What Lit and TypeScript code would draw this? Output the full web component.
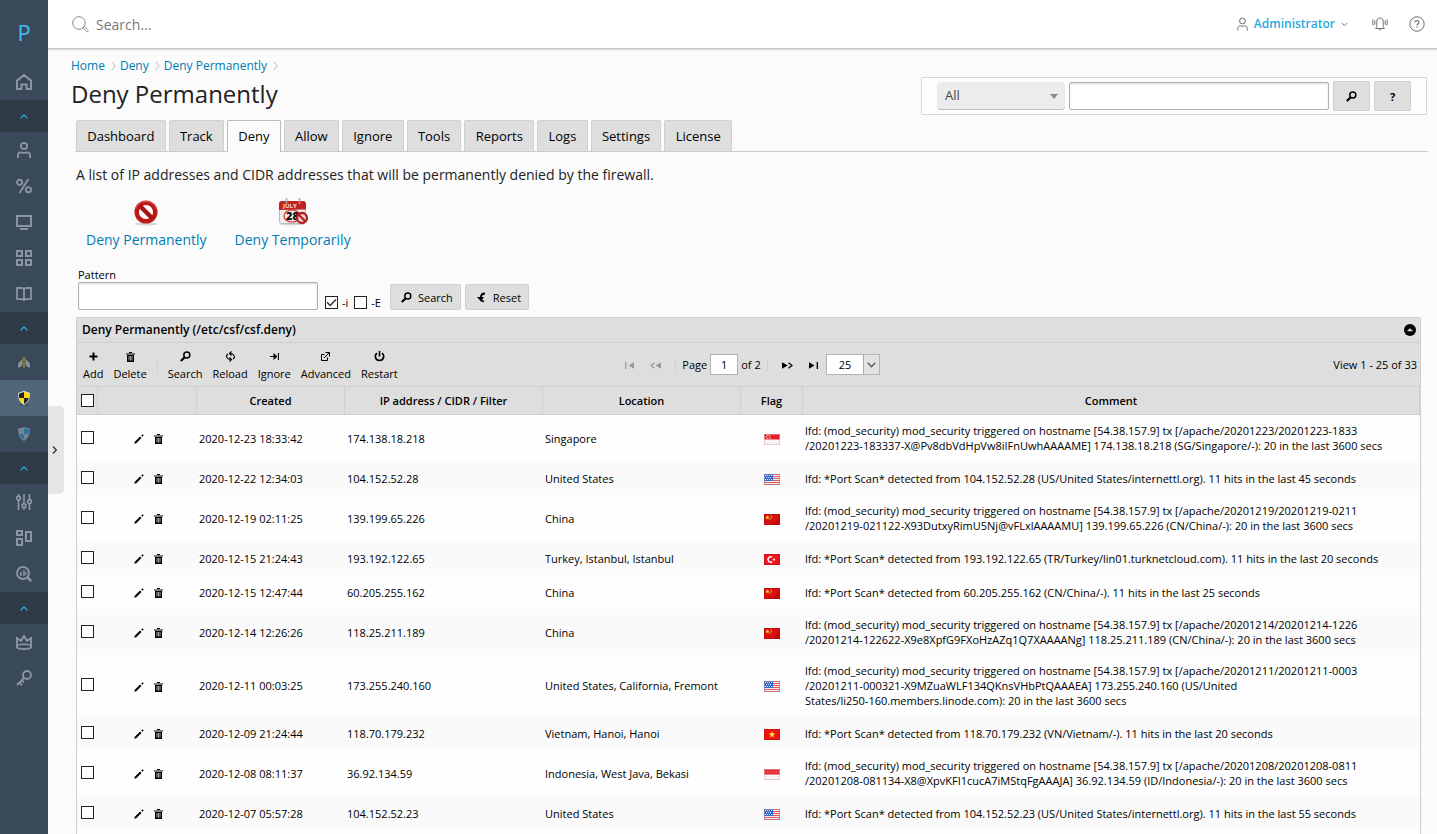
import { LitElement, html, css, svg, nothing, TemplateResult } from "lit";
import { customElement } from "lit/decorators.js";

type Icon = { w: number; h: number; body: unknown };

const line = (d: string, w = 1.7) =>
  svg`<path d=${d} fill="none" stroke="currentColor" stroke-width=${w}/>`;
const fill = (d: string) => svg`<path d=${d} fill="currentColor"/>`;

const icons: Record<string, Icon> = {
  home: { w: 16, h: 16, body: line("M1 6.6 8 1l7 5.600V15h-4.400v-4.600H5.400V15H1z", 2) },
  user: {
    w: 16,
    h: 16,
    body: svg`<circle cx="8" cy="4" r="3.100" fill="none" stroke="currentColor" stroke-width="1.900"/>
      ${line("M1.900 16v-2.200c0-2.200 1.200-3.400 3-3.400 1 0 1.800.7 3.100.7s2.100-.7 3.100-.7c1.800 0 3 1.200 3 3.400V16", 1.9)}`,
  },
  percent: {
    w: 16,
    h: 16,
    body: svg`<circle cx="3.600" cy="4.300" r="2.600" fill="none" stroke="currentColor" stroke-width="1.900"/>
      <circle cx="12.400" cy="11.700" r="2.600" fill="none" stroke="currentColor" stroke-width="1.900"/>
      ${line("M12.500 1 3.500 15", 1.9)}`,
  },
  screen: { w: 16, h: 16, body: svg`${line("M1 2h14v10H1z", 2)}${line("M4 15h8", 2)}` },
  grid: { w: 16, h: 16, body: line("M1 1h5v5H1zM10 1h5v5h-5zM1 10h5v5H1zM10 10h5v5h-5z", 2) },
  book: { w: 16, h: 16, body: line("M8 14.200 6.500 13.200H1V2h5.500L8 3l1.500-1H15v11.200H9.500zM8 3v11", 1.8) },
  sliders: {
    w: 16,
    h: 16,
    body: svg`${line("M2.500 0v2M2.500 6.500V16M8 0v9.500M8 14v2M13.500 0v5.500M13.500 10v6")}
      <g fill="none" stroke="currentColor" stroke-width="1.700"><circle cx="2.500" cy="4.200" r="1.900"/><circle cx="8" cy="11.800" r="1.900"/><circle cx="13.500" cy="7.700" r="1.900"/></g>`,
  },
  blocks: { w: 16, h: 16, body: line("M1 1h5v4H1zM1 9h5v6H1zM10 2h5v9h-5z", 2) },
  stats: {
    w: 16,
    h: 16,
    body: svg`<circle cx="7" cy="7" r="6" fill="none" stroke="currentColor" stroke-width="1.900"/>
      ${line("M11.500 11.500 15.300 15.300", 2.6)}${line("M5 6v4M8 4v6", 1.6)}${line("M10 6v3", 1.2)}`,
  },
  crown: {
    w: 16,
    h: 16,
    body: svg`${line("M1 13.500V4l4 2.800L8 2l3 4.800L15 4v9.500c-1.500 2-12.500 2-14 0z", 1.9)}${line("M1.500 11.500c2.500-1.800 10.500-1.800 13 0", 1.5)}`,
  },
  key: {
    w: 16,
    h: 16,
    body: svg`<circle cx="11" cy="5" r="4" fill="none" stroke="currentColor" stroke-width="1.900"/>
      ${line("M8.200 7.800 1 15M3.500 12.500 6 15M5.800 10.200 8 12.400", 1.9)}`,
  },
  up: { w: 8, h: 5, body: line("M.5 4.400 4 1l3.500 3.400", 1.3) },
  right: { w: 5, h: 8, body: line("M1 .5 4.300 4 1 7.500", 1.3) },
  down: { w: 7, h: 5, body: line("M.8 1 3.500 3.700 6.200 1", 1) },
  crumb: { w: 5, h: 10, body: line("M.6.800 4.300 5 .6 9.200", 1) },
  bee: {
    w: 16,
    h: 16,
    body: svg`<path d="M6.500 5.500C3 7 1.500 10 2 13.500c2 .500 4-2 4.800-4zM9.500 5.500C13 7 14.500 10 14 13.500c-2 .500-4-2-4.800-4z" fill="#8595a3"/>
      <path d="M8 3.500c2 0 2.400 3 2 6S8.800 14 8 14s-1.600-1.500-2-4.500.0-6 2-6z" fill="#847a42"/>
      <path d="M6.500 3.500 5.800 2M9.500 3.500 10.200 2M6 7.500h4M6.200 10.200h3.600" stroke="#5d5b43" fill="none"/>`,
  },
  guard: {
    w: 16,
    h: 16,
    body: svg`<ellipse cx="8" cy="14.600" rx="5" ry="1" fill="#3d4c5a"/>
      <path d="M8 .8 14 3c0 5.500-1.500 9.500-6 12C3.500 12.500 2 8.500 2 3z" fill="#d9dcde"/>
      <path d="M8 2v6H3.300C3 6.500 2.900 5.200 2.900 3.800z" fill="#222"/><path d="M8 2v6h4.700c.3-1.500.4-2.800.4-4.200z" fill="#ffd600"/>
      <path d="M8 8H3.300C4 10.700 5.500 12.700 8 14z" fill="#ffd600"/><path d="M8 8h4.700C12 10.700 10.500 12.700 8 14z" fill="#222"/>`,
  },
  shield: {
    w: 16,
    h: 16,
    body: svg`<path d="M8 1c2 1 4 1.300 6 1.300 0 6-1.500 10.200-6 12.700-4.500-2.500-6-6.700-6-12.700 2 0 4-.300 6-1.300z" fill="#74838f"/>
      <path d="M8 2.200c1.700.700 3.200 1 5 1.100 0 1.700-.1 3.200-.5 4.700H8zM8 8v5.800C5.300 12 4.100 10.200 3.500 8z" fill="#2f71a0"/>`,
  },
  search: {
    w: 17,
    h: 17,
    body: svg`<circle cx="7" cy="7" r="6.300" fill="none" stroke="#8a8a8a"/><path d="m11.600 11.600 1-.9 3.900 4-1.300 1.300-4-3.900z" fill="none" stroke="#8a8a8a" stroke-width=".9"/>`,
  },
  account: {
    w: 11,
    h: 14,
    body: svg`<circle cx="5.500" cy="4" r="2.900" fill="none" stroke="currentColor"/>${line("M.8 13.500V11.300C.8 9.800 1.800 8.800 3.200 8.800c.8 0 1.300.5 2.300.5s1.500-.5 2.300-.5c1.400 0 2.400 1 2.400 2.500v2.200", 1)}`,
  },
  bell: {
    w: 16,
    h: 14,
    body: svg`${line("M3.500 11.500c1-.7 1.300-1.700 1.300-3V4.500C4.800 2.500 6 1 8 1s3.200 1.500 3.200 3.500v4c0 1.300.3 2.300 1.300 3zM7 12.500c.3.700 1.700.7 2 0M2.800 3.500v4.200M13.200 3.500v4.200M1.200 2.500C.4 4.300.4 6.500 1.200 8.500M14.800 2.500c.8 1.800.8 4 0 6", 1)}`,
  },
  help: {
    w: 16,
    h: 16,
    body: svg`<circle cx="8" cy="8" r="7.200" fill="none" stroke="currentColor"/>${line("M6 6.500C6 4 10 4 10 6.300 10 7.800 8 7.800 8 9.500M8 10.500v1.300", 1.1)}`,
  },
  lens: {
    w: 11,
    h: 11,
    body: svg`<circle cx="6.800" cy="4" r="3" fill="none" stroke="currentColor" stroke-width="1.500"/>${line("M4.500 6.500.8 10", 2.2)}`,
  },
  undo: { w: 11, h: 11, body: svg`${fill("M1 5h7L5 9.500z")}${line("M9 1.500C6 1.500 4.800 2.800 4.800 6M4.800 8.500 8 9.500", 1.8)}` },
  plus: { w: 9, h: 9, body: line("M4.500.500v8M.5 4.500h8", 2) },
  trash: {
    w: 9,
    h: 10,
    body: svg`${line("M0 2h9M3 .5h3", 1.2)}${fill("M1 3h7v7H1z")}<path d="M3 4v4.500M4.500 4v4.500M6 4v4.500" stroke="#eee" stroke-width=".7"/>`,
  },
  reload: {
    w: 11,
    h: 11,
    body: line("M6.500.5 4.500 2.500l2 2M4.500 2.500C8 2.500 9.500 4 9.500 6.500L8 8M4.500 10.500l2-2-2-2M6.500 8.500C3 8.500 1.500 7 1.500 4.500L3 3", 1.1),
  },
  tab: { w: 9, h: 9, body: svg`${line("M0 4.500h6M8.500 1v7", 1.2)}${fill("M3.500 1 7.500 4.500l-4 3.500z")}` },
  popout: { w: 9, h: 9, body: line("M3.500 2.500h-3v6h6v-3M4.500.5h4v4M8.500.5 3 6", 1) },
  power: { w: 11, h: 11, body: line("M3 2.300C.2 4 1 9.500 5.500 9.500S10.800 4 8 2.300M5.500 0v5.500", 1.7) },
  pencil: { w: 10, h: 10, body: svg`${line("m1.800 8.200 5-5", 2)}${fill("M.3 9.700 1 7l2 2zM7.300 1.500 8.500.3l1.200 1.200-1.200 1.200z")}` },
  first: { w: 9, h: 7, body: svg`${line("M.7 0v7", 1.3)}${fill("M9 .3v6.400L3.500 3.500z")}` },
  prev: { w: 11, h: 7, body: svg`${line("M4.500.8 1 3.500l3.500 2.700", 1.2)}${fill("M11 .3v6.400L5.500 3.500z")}` },
  next: { w: 11, h: 7, body: svg`${line("M6.500.8 10 3.500 6.500 6.200", 1.2)}${fill("M0 .3v6.400L5.800 3.500z")}` },
  last: { w: 9, h: 7, body: svg`${line("M8.300 0v7", 1.3)}${fill("M0 .3v6.400L5.500 3.500z")}` },
  collapse: {
    w: 12,
    h: 12,
    body: svg`<circle cx="6" cy="6" r="6" fill="#000"/><path d="M2.800 7.300 6 4.300l3.200 3z" fill="#dedede"/>`,
  },
  caret: { w: 8, h: 5, body: fill("M0 0h8L4 5z") },
  chevron: { w: 9, h: 6, body: line("M.8.800 4.500 4.700 8.200.8", 1.3) },
  check: { w: 11, h: 9, body: line("M1 4.300 4.200 7.500 10 1.500", 1.5) },
  deny: {
    w: 28,
    h: 28,
    body: svg`<ellipse cx="14" cy="26" rx="12" ry="1.500" fill="#d5d5d5"/>
      <circle cx="14" cy="14" r="9.300" fill="#fff" stroke="#bd1a17" stroke-width="4.500"/>
      <path d="m7.500 7.500 13 13" stroke="#a81614" stroke-width="4.500"/><path d="M3.500 11A11 11 0 0 1 24.500 11" fill="none" stroke="#dd5f5b"/>`,
  },
  calendar: {
    w: 32,
    h: 28,
    body: svg`<ellipse cx="15" cy="26" rx="13" ry="1.300" fill="#d5d5d5"/>
      <rect x="2.500" y="4" width="26" height="21.500" rx="2" fill="#eee" stroke="#bbb"/>
      <path d="M2 12V6q0-3 3-3h21q3 0 3 3v5.500z" fill="#bf2420"/><path d="M9.500 0v6M22.500 0v6" stroke="#aaa" stroke-width="1.500"/>
      <text x="6" y="10" font-size="6" font-weight="700" fill="#ffdcdc" font-family="Open Sans, sans-serif">JULY</text>
      <ellipse cx="15" cy="18" rx="8" ry="6" fill="none" stroke="#d22f2b" stroke-width="1.200"/>
      <text x="9" y="22" font-size="11" font-weight="800" fill="#111" font-family="Open Sans, sans-serif">28</text>
      <circle cx="25" cy="20" r="5" fill="#e8d6d6" stroke="#b81c19" stroke-width="2.300"/><path d="m21.500 16.500 7 7" stroke="#b81c19" stroke-width="2.300"/>`,
  },
};

const icon = (name: string) => {
  const i = icons[name];
  return html`<svg width=${i.w} height=${i.h} viewBox="0 0 ${i.w} ${i.h}" aria-hidden="true">${i.body}</svg>`;
};

const STAR = "M0-1 .3-.3 1-.3 .4.200.6.900 0 .5-.6.900-.4.200-1-.3-.3-.3z";
const flagArt: Record<string, unknown> = {
  SG: svg`<path fill="#f7f3f3" d="M0 0h16v11H0z"/><path fill="#e81c24" d="M0 0h16v5.500H0z"/><path d="M4.500 1.500A1.600 1.600 0 1 0 4.500 4.500M5 2h1.500M5.500 4H7" stroke="#fff" stroke-width=".8" fill="none"/>`,
  ID: svg`<path fill="#f7f3f3" d="M0 0h16v11H0z"/><path fill="#e2252b" d="M0 0h16v5.500H0z"/><path d="M0 3h16" stroke="#f0585c"/>`,
  US: svg`<path fill="#f6eeee" d="M0 0h16v11H0z"/><path d="M0 .5h16M0 2.500h16M0 4.500h16M0 6.500h16M0 8.500h16M0 10.500h16" stroke="#ea5a55"/><path fill="#3468cc" d="M0 0h9v7H0z"/><path d="M1 1.500h7M2 3.500h6M1 5.500h7" stroke="#dce6ff" stroke-dasharray="1 1"/>`,
  CN: svg`<path fill="#d61111" d="M0 0h16v11H0z"/><path fill="#c50a0a" d="M8 11 16 3v8z"/><path fill="#ffd930" transform="translate(3.500 3.500) scale(2.200)" d=${STAR}/><path d="M6.500 1.200 7.500 2.500 7 4.500 5.500 5.500" stroke="#ffb020" stroke-width=".9" fill="none"/>`,
  TR: svg`<path fill="#ec1620" d="M0 0h16v11H0z"/><path d="M8.200 3.200A2.700 2.700 0 1 0 8.200 7.800" stroke="#fff" stroke-width="1.400" fill="none"/><path fill="#fff" transform="translate(10 5.500) scale(1.600)" d=${STAR}/>`,
  VN: svg`<path fill="#ec1515" d="M0 0h16v11H0z"/><path fill="#ffef30" transform="translate(8 5.500) scale(3.200)" d=${STAR}/>`,
};
const edge: Record<string, string> = { SG: "#d9b0b0", ID: "#d9b0b0", US: "#a3849c", CN: "#ad0909", TR: "#c80f18", VN: "#d00a0a" };
const flag = (code: string) => html`<svg class="flag" width="16" height="11" viewBox="0 0 16 11" role="img" aria-label=${code}>
  ${flagArt[code]}<path d="M.5.500h15v10H.5z" fill="none" stroke=${edge[code]} stroke-opacity=".6"/></svg>`;

const nav: string[][] = [
  ["home"],
  ["user", "percent", "screen", "grid", "book"],
  ["bee", "guard", "shield"],
  ["sliders", "blocks", "stats"],
  ["crown", "key"],
];
const tabs = ["Dashboard", "Track", "Deny", "Allow", "Ignore", "Tools", "Reports", "Logs", "Settings", "License"];
const actions: [string, string][] = [
  ["plus", "Add"],
  ["trash", "Delete"],
  ["", ""],
  ["lens", "Search"],
  ["reload", "Reload"],
  ["tab", "Ignore"],
  ["popout", "Advanced"],
  ["power", "Restart"],
];
const rows: [string, string, string, string, string][] = [
  ["2020-12-23 18:33:42", "174.138.18.218", "Singapore", "SG",
    "lfd: (mod_security) mod_security triggered on hostname [54.38.157.9] tx [/apache/20201223/20201223-1833\n/20201223-183337-X@Pv8dbVdHpVw8iIFnUwhAAAAME] 174.138.18.218 (SG/Singapore/-): 20 in the last 3600 secs"],
  ["2020-12-22 12:34:03", "104.152.52.28", "United States", "US",
    "lfd: *Port Scan* detected from 104.152.52.28 (US/United States/internettl.org). 11 hits in the last 45 seconds"],
  ["2020-12-19 02:11:25", "139.199.65.226", "China", "CN",
    "lfd: (mod_security) mod_security triggered on hostname [54.38.157.9] tx [/apache/20201219/20201219-0211\n/20201219-021122-X93DutxyRimU5Nj@vFLxlAAAAMU] 139.199.65.226 (CN/China/-): 20 in the last 3600 secs"],
  ["2020-12-15 21:24:43", "193.192.122.65", "Turkey, Istanbul, Istanbul", "TR",
    "lfd: *Port Scan* detected from 193.192.122.65 (TR/Turkey/lin01.turknetcloud.com). 11 hits in the last 20 seconds"],
  ["2020-12-15 12:47:44", "60.205.255.162", "China", "CN",
    "lfd: *Port Scan* detected from 60.205.255.162 (CN/China/-). 11 hits in the last 25 seconds"],
  ["2020-12-14 12:26:26", "118.25.211.189", "China", "CN",
    "lfd: (mod_security) mod_security triggered on hostname [54.38.157.9] tx [/apache/20201214/20201214-1226\n/20201214-122622-X9e8XpfG9FXoHzAZq1Q7XAAAANg] 118.25.211.189 (CN/China/-): 20 in the last 3600 secs"],
  ["2020-12-11 00:03:25", "173.255.240.160", "United States, California, Fremont", "US",
    "lfd: (mod_security) mod_security triggered on hostname [54.38.157.9] tx [/apache/20201211/20201211-0003\n/20201211-000321-X9MZuaWLF134QKnsVHbPtQAAAEA] 173.255.240.160 (US/United\nStates/li250-160.members.linode.com): 20 in the last 3600 secs"],
  ["2020-12-09 21:24:44", "118.70.179.232", "Vietnam, Hanoi, Hanoi", "VN",
    "lfd: *Port Scan* detected from 118.70.179.232 (VN/Vietnam/-). 11 hits in the last 20 seconds"],
  ["2020-12-08 08:11:37", "36.92.134.59", "Indonesia, West Java, Bekasi", "ID",
    "lfd: (mod_security) mod_security triggered on hostname [54.38.157.9] tx [/apache/20201208/20201208-0811\n/20201208-081134-X8@XpvKFI1cucA7iMStqFgAAAJA] 36.92.134.59 (ID/Indonesia/-): 20 in the last 3600 secs"],
  ["2020-12-07 05:57:28", "104.152.52.23", "United States", "US",
    "lfd: *Port Scan* detected from 104.152.52.23 (US/United States/internettl.org). 11 hits in the last 55 seconds"],
];

@customElement("app-root")
export class AppRoot extends LitElement {
  static styles = css`
    :host { display: flex; min-height: 100vh; background: #fbfbfb; color: #000; font: 11px/15px "Open Sans", sans-serif; }
    *, *::before, *::after { box-sizing: border-box; }
    svg { display: block; flex: none; }
    button, input, select { font: inherit; color: inherit; margin: 0; padding: 0; border: 0; background: none; border-radius: 0; }
    button { cursor: pointer; }
    a { color: #007cb0; text-decoration: none; }

    .side { width: 48px; flex: none; background: #394959; color: #8995a1; position: relative; }
    .logo { height: 64px; display: flex; align-items: center; justify-content: center; font-size: 22px; line-height: 30px; color: #3fbef3; }
    .item, .fold { width: 100%; display: flex; align-items: center; justify-content: center; }
    .item { height: 36px; color: inherit; }
    .item.on { background: #516779; }
    .fold { height: 32px; background: #2e3a46; color: #35ade0; }
    .handle { position: absolute; left: 48px; top: 406px; width: 16px; height: 88px; display: flex; align-items: center; justify-content: center; padding-right: 3px; background: #e5e5e5; border-radius: 0 5px 5px 0; color: #333; }

    .page { flex: 1; min-width: 0; display: flex; flex-direction: column; }
    .top { height: 49px; display: flex; align-items: center; justify-content: space-between; padding: 0 12px 0 24px; background: #fff; border-bottom: 1px solid #c8cbcb; box-shadow: 0 1px 1px #ddd; }
    .find { display: flex; align-items: center; gap: 7px; flex: 1; }
    .find input { font-size: 14px; line-height: 20px; height: 28px; width: 300px; outline: none; }
    .find input::placeholder { color: #777; opacity: 1; }
    .tools { display: flex; align-items: center; color: #667078; }
    .account { display: flex; align-items: center; gap: 6px; margin-right: 24px; }
    .account b { font-size: 12px; line-height: 18px; font-weight: 600; color: #28aade; }
    .bell { margin-right: 21px; }

    .body { flex: 1; display: flex; flex-direction: column; padding: 8px 0 0 23px; }
    .head { display: flex; justify-content: space-between; align-items: flex-end; padding-right: 10px; }
    .crumbs { display: flex; align-items: center; gap: 4px; font-size: 12px; line-height: 18px; color: #bbb; }
    .crumbs a { margin-right: 2px; }
    h1 { margin: 1px 0 3px; font-size: 24px; line-height: 36px; font-weight: 400; color: #222; }
    .box { display: flex; align-items: center; gap: 4px; height: 38px; padding: 0 15px; border: 1px solid #d5d5d5; border-radius: 2px; background: #fdfdfd; }
    .stack { display: inline-grid; align-items: center; }
    .stack > * { grid-area: 1 / 1; }
    .stack svg { justify-self: end; pointer-events: none; }
    .stack select { appearance: none; }
    .type select { width: 128px; height: 28px; padding-left: 8px; font-size: 13px; background: #ececec; border-bottom: 1px solid #b9c0c6; border-radius: 4px; color: #444; }
    .type svg { margin-right: 7px; color: #84888c; }
    .field { height: 28px; border: 1px solid #b0b0b0; border-radius: 2px; background: #fff; box-shadow: inset 0 1px 2px #ddd; padding: 0 6px; }
    .query { width: 260px; }
    .btn { display: inline-flex; align-items: center; justify-content: center; gap: 6px; background: #dedede; border: 1px solid #d0d0d0; border-radius: 2px; height: 26px; padding: 0 7px 0 10px; }
    .box .btn { height: 30px; width: 37px; padding: 0; font-weight: 700; }

    .strip { margin: 5px 9px 0 4px; padding-left: 1px; border-bottom: 1px solid #c9cccc; }
    .tabs { display: flex; gap: 3px; max-width: 656px; }
    .tab { flex: 1 0 auto; height: 31px; padding: 6px 10px 0; border: 1px solid #d0d0d0; border-bottom: 0; border-radius: 2px 2px 0 0; background: #dedede; color: #000; font-size: 13px; line-height: 18px; text-align: center; }
    .tab.on { background: #fbfbfb; border-color: #b9bcbc; margin-bottom: -1px; height: 32px; }
    .content { flex: 1; display: flex; flex-direction: column; padding: 13px 16px 0 5px; }
    .lead { margin: 0; font-size: 14px; line-height: 20px; color: #222; }
    .links { display: flex; gap: 28px; padding: 13px 10px 17px; }
    .links a { display: flex; flex-direction: column; align-items: center; gap: 4px; font-size: 14px; line-height: 20px; }

    form { display: flex; align-items: flex-end; margin: 0 0 7px 2px; }
    .pattern { display: flex; flex-direction: column; width: 240px; margin-right: 7px; }
    .check { display: flex; align-items: center; gap: 4px; margin-right: 6px; height: 16px; }
    .tick { appearance: none; display: block; width: 13px; height: 13px; border: 1px solid #222; background: #fff; }
    .stack .tick + svg { justify-self: center; color: #333; }
    .go { display: flex; gap: 4px; margin-left: 3px; }

    .panel { flex: 1; border: 1px solid #d0d0d0; border-bottom: 0; border-radius: 2px 2px 0 0; background: #fefefe; }
    .title { display: flex; align-items: center; justify-content: space-between; height: 25px; padding: 0 4px 0 5px; background: #dedede; border-bottom: 1px solid #cfcfcf; }
    h2 { margin: 0; font-size: 12px; line-height: 18px; font-weight: 600; }
    .bar { display: grid; grid-template-columns: 1fr auto 1fr; align-items: center; min-height: 44px; background: #dedede; border-bottom: 1px solid #cfcfcf; }
    .acts { display: flex; align-items: center; padding: 2px 0 0 1px; }
    .act { display: flex; flex-direction: column; align-items: center; gap: 3px; padding: 0 5px; }
    .glyph { height: 13px; display: flex; align-items: center; }
    .sep { width: 1px; height: 12px; background: #d0d0d0; margin: 0 5px; }
    .pager { display: flex; align-items: center; }
    .pager button { padding: 8px 8px 6px; }
    .pager .off { color: #999; }
    .pager .sep { margin: 0 6px; }
    .num { width: 28px; height: 21px; margin: 0 3px; padding: 0; text-align: center; border: 1px solid #b0b0b0; background: #fff; }
    .size select { width: 54px; height: 21px; padding-left: 12px; background: linear-gradient(90deg, #fff 36px, #aaa 36px, #aaa 37px, #e2e2e2 37px); border: 1px solid #b5b5b5; }
    .size svg { margin-right: 4px; color: #555; }
    .view { text-align: right; padding-right: 3px; }

    table { width: 100%; table-layout: fixed; border-collapse: separate; border-spacing: 0; }
    th { height: 28px; padding: 0; background: #dedede; font-weight: 600; text-align: center; border-right: 1px solid #d0d0d0; border-bottom: 1px solid #cfcfcf; }
    td { padding: 8px 2px; height: 34px; vertical-align: middle; white-space: pre-line; }
    tbody tr:nth-child(even) { background: #fafafa; }
    td.ip, td.loc, td.act2, td.pick, td.fl { white-space: normal; }
    th.pick { padding: 0 0 0 4px; }
    td.pick { padding: 0 0 2px 4px; }
    td.act2, td.fl { padding: 2px 0 0; }
    .edit { display: flex; gap: 10px; padding-left: 36px; }
    .flag { margin: 0 auto; }
    .c1 { width: 21px; } .c2 { width: 99px; } .c3 { width: 148px; } .c4, .c5 { width: 198px; } .c6 { width: 62px; }
  `;

  private row(r: (typeof rows)[number]): TemplateResult {
    const [created, ip, place, code, note] = r;
    return html`<tr>
      <td class="pick"><input class="tick" type="checkbox" aria-label="Select ${ip}" /></td>
      <td class="act2"><div class="edit"><button aria-label="Edit ${ip}">${icon("pencil")}</button><button aria-label="Delete ${ip}">${icon("trash")}</button></div></td>
      <td>${created}</td><td class="ip">${ip}</td><td class="loc">${place}</td><td class="fl">${flag(code)}</td><td>${note}</td>
    </tr>`;
  }

  render() {
    return html`
      <nav class="side" aria-label="Main">
        <div class="logo">P</div>
        ${nav.map((group, i) => html`
          ${i ? html`<button class="fold" aria-label="Toggle section">${icon("up")}</button>` : nothing}
          ${group.map((n) => html`<a class="item ${n === "guard" ? "on" : ""}" href="#" aria-label=${n}>${icon(n)}</a>`)}`)}
        <button class="handle" aria-label="Expand sidebar">${icon("right")}</button>
      </nav>
      <div class="page">
        <header class="top">
          <label class="find">${icon("search")}<input type="text" placeholder="Search..." aria-label="Search" /></label>
          <div class="tools">
            <button class="account">${icon("account")}<b>Administrator</b>${icon("down")}</button>
            <button class="bell" aria-label="Notifications">${icon("bell")}</button>
            <button aria-label="Help">${icon("help")}</button>
          </div>
        </header>
        <main class="body">
          <div class="head">
            <div>
              <nav class="crumbs" aria-label="Breadcrumb">
                ${["Home", "Deny", "Deny Permanently"].map((c) => html`<a href="#">${c}</a>${icon("crumb")}`)}
              </nav>
              <h1>Deny Permanently</h1>
            </div>
            <div class="box">
              <span class="stack type"><select aria-label="Search in"><option>All</option></select>${icon("caret")}</span>
              <input class="field query" type="text" aria-label="Query" />
              <button class="btn" aria-label="Search">${icon("lens")}</button>
              <button class="btn">?</button>
            </div>
          </div>
          <div class="strip">
            <nav class="tabs" aria-label="Sections">
              ${tabs.map((t) => html`<a class="tab ${t === "Deny" ? "on" : ""}" href="#">${t}</a>`)}
            </nav>
          </div>
          <div class="content">
            <p class="lead">A list of IP addresses and CIDR addresses that will be permanently denied by the firewall.</p>
            <div class="links">
              <a href="#">${icon("deny")}Deny Permanently</a>
              <a href="#">${icon("calendar")}Deny Temporarily</a>
            </div>
            <form @submit=${(e: Event) => e.preventDefault()}>
              <label class="pattern">Pattern<input class="field" type="text" /></label>
              <label class="check"><span class="stack"><input class="tick" type="checkbox" checked />${icon("check")}</span>-i</label>
              <label class="check"><input class="tick" type="checkbox" />-E</label>
              <div class="go">
                <button class="btn">${icon("lens")}Search</button>
                <button class="btn" type="reset">${icon("undo")}Reset</button>
              </div>
            </form>
            <section class="panel">
              <div class="title"><h2>Deny Permanently (/etc/csf/csf.deny)</h2><button aria-label="Collapse">${icon("collapse")}</button></div>
              <div class="bar">
                <div class="acts">
                  ${actions.map(([g, t]) => g
                    ? html`<button class="act"><span class="glyph">${icon(g)}</span>${t}</button>`
                    : html`<span class="sep"></span>`)}
                </div>
                <div class="pager">
                  <button class="off" aria-label="First page">${icon("first")}</button>
                  <button class="off" aria-label="Previous page">${icon("prev")}</button>
                  <span class="sep"></span>
                  <label>Page<input class="num" type="text" value="1" /></label>of 2
                  <span class="sep"></span>
                  <button aria-label="Next page">${icon("next")}</button>
                  <button aria-label="Last page">${icon("last")}</button>
                  <span class="stack size"><select aria-label="Rows per page"><option>25</option></select>${icon("chevron")}</span>
                </div>
                <div class="view">View 1 - 25 of 33</div>
              </div>
              <table>
                <thead>
                  <tr>
                    <th class="pick c1"><input class="tick" type="checkbox" aria-label="Select all" /></th>
                    <th class="c2"></th><th class="c3">Created</th><th class="c4">IP address / CIDR / Filter</th>
                    <th class="c5">Location</th><th class="c6">Flag</th><th>Comment</th>
                  </tr>
                </thead>
                <tbody>${rows.map((r) => this.row(r))}</tbody>
              </table>
            </section>
          </div>
        </main>
      </div>`;
  }
}
